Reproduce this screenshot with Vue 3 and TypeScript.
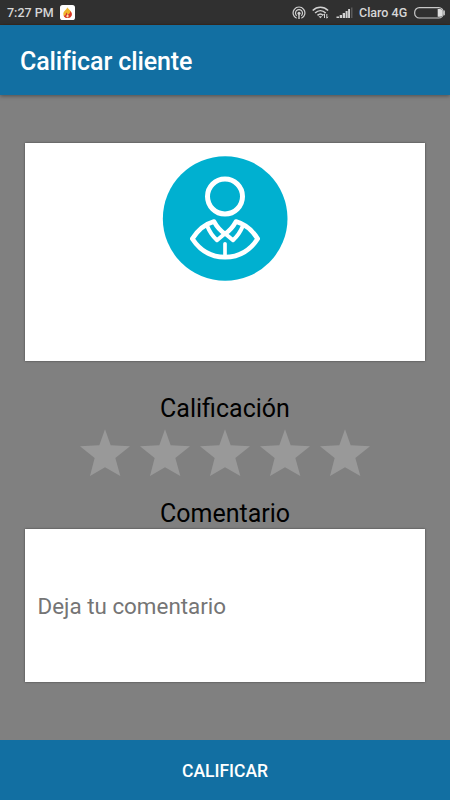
<script setup lang="ts">
import { ref } from 'vue'

const rating = ref<number>(0)
const comment = ref<string>('')
const stars: number[] = [1, 2, 3, 4, 5]
</script>

<template>
  <div class="screen">
    <div class="status">
      <span class="clock">7:27 PM</span>
      <svg class="notif" width="15" height="15" viewBox="0 0 15 15">
        <rect width="15" height="15" rx="2.6" fill="#fff" />
        <path d="M7.2 2.2C8 4 11.6 5.5 11.6 9c0 2.400-1.700 4-4 4s-4.300-1.500-4.300-4c0-1.500.8-2.700 1.700-3.600C6 4.500 7 3.600 7.200 2.200z" fill="#efb52c" />
        <path d="M10.300 6c1.500 1.500 1.900 3 1.400 4.500-.6 1.700-2.200 2.500-4.100 2.500-1.800 0-3.300-.8-4-2.300C5.500 11 6 9 6.200 7.500c.8.6 1.200 1.400 1.300 2.300C9 9.200 10.400 8 10.300 6z" fill="#d9362c" />
        <path d="M7.600 9.300c.8.8 1.200 1.400 1 2.200-.2.600-.6.900-1.200.9s-1.100-.4-1.100-1.100c0-.8.900-1.200 1.300-2z" fill="#f9dcae" />
      </svg>
      <span class="spacer"></span>
      <svg class="hotspot" width="14" height="14" viewBox="0 0 14 14" fill="none" stroke="#d2d2d2">
        <path d="M4.600 12.300A5.900 5.900 0 1 1 9.400 12.300" stroke-width="1.200" />
        <path d="M4.700 9.700A3.500 3.500 0 1 1 9.300 9.700" stroke-width="1.200" />
        <circle cx="7" cy="7.200" r="1.500" fill="#d2d2d2" stroke="none" />
        <path d="M7 8v5" stroke-width="1.400" />
      </svg>
      <svg class="wifi" width="17" height="13" viewBox="0 0 17 13" fill="none" stroke="#d2d2d2" stroke-width="1.600">
        <path d="M.7 4.500C5.200.2 11.600.2 16.100 4.500" />
        <path d="M3.100 7C6.300 3.900 10.500 3.900 13.700 7" />
        <path d="M5.500 9.300c1.800-1.600 4-1.600 5.700 0" />
        <path d="M6.500 10.200h3.800l-1.900 2z" fill="#d2d2d2" stroke="none" />
        <path d="M12.500 12V7.800m-1.100 1.300 1.100-1.300M14.800 8v4.200m1.100-1.400-1.100 1.400" stroke-width="1" />
      </svg>
      <svg class="signal" width="17" height="12" viewBox="0 0 17 12" fill="#d2d2d2">
        <rect x="0.500" y="9.500" width="2.500" height="1.500" />
        <rect x="3.700" y="8" width="2.300" height="3" />
        <rect x="6.700" y="6" width="2.300" height="5" />
        <rect x="9.600" y="4" width="2" height="7" />
        <rect x="12.100" y="2" width="1.900" height="9" />
        <rect x="15" y="0.500" width="1.500" height="10.500" fill="#5b5b5b" />
      </svg>
      <span class="carrier">Claro 4G</span>
      <svg class="battery" width="32" height="12" viewBox="0 0 32 12">
        <rect x="0.700" y="0.700" width="28.600" height="10.300" rx="4.600" fill="none" stroke="#c8c8c8" stroke-width="1.200" />
        <path d="M23.700 2h2.300a2.700 2.700 0 0 1 2.700 2.700v2.300a2.700 2.700 0 0 1-2.700 2.700h-2.300z" fill="#dedede" />
        <path d="M30.300 3.500v4.800" stroke="#c8c8c8" stroke-width="1.200" />
      </svg>
    </div>

    <header class="appbar">
      <h1>Calificar cliente</h1>
    </header>

    <main class="content">
      <section class="card profile">
        <svg class="avatar" width="126" height="126" viewBox="21 14.500 378 378" fill="none" stroke="#fff" stroke-linejoin="round" stroke-linecap="round">
          <circle cx="210.500" cy="205" r="187" fill="#00b0d0" stroke="none" />
          <circle cx="210" cy="139" r="52.500" stroke-width="15" />
          <path d="M177 214C149 222 128 240 112 266C136 303 170 321 210 321S284 303 308 266C292 240 271 222 243 214Q230 238 210 251Q190 238 177 214Z" stroke-width="14" />
          <path d="M157 228C163 243 173 258 186 270L210 250L234 270C247 258 257 243 263 228" stroke-width="12" />
          <path d="M210 281V319" stroke-width="11" />
        </svg>
      </section>

      <h2 class="label rating-label">Calificación</h2>
      <div class="stars">
        <button
          v-for="n in stars"
          :key="n"
          type="button"
          class="star"
          :class="{ on: n <= rating }"
          @click="rating = n"
        >
          <svg width="50" height="48" viewBox="0 0 150 144">
            <path d="M75 1L92 49L150 52L106 87L121 141L75 115L30 141L44 87L0 52L58 49Z" />
          </svg>
        </button>
      </div>

      <h2 class="label comment-label">Comentario</h2>
      <input v-model="comment" class="card comment" type="text" placeholder="Deja tu comentario" />
    </main>

    <button class="submit" type="button">CALIFICAR</button>
  </div>
</template>

<style>
body {
  margin: 0;
}
</style>

<style scoped>
.screen {
  box-sizing: border-box;
  width: 450px;
  height: 800px;
  display: flex;
  flex-direction: column;
  background: #808080;
  font-family: Roboto, "Liberation Sans", sans-serif;
  overflow: hidden;
}
.status {
  box-sizing: border-box;
  flex: none;
  height: 25px;
  display: flex;
  align-items: center;
  padding: 0 4px 0 7px;
  background: #303030;
  border-bottom: 1px solid #392b20;
  color: #d6d6d6;
  font-size: 12.5px;
  font-weight: 500;
  line-height: 24px;
}
.status svg {
  flex: none;
  display: block;
}
.clock {
  width: 53px;
  padding-top: 1px;
  white-space: nowrap;
}
.notif {
  margin-top: 1px;
}
.spacer {
  flex: 1;
}
.hotspot {
  margin-top: 1px;
}
.wifi {
  margin: 1px 0 0 6px;
}
.signal {
  margin: 2px 0 0 7px;
}
.carrier {
  margin-left: 6px;
  width: 49px;
  padding-top: 1px;
  white-space: nowrap;
}
.battery {
  margin: 1px 0 0 6px;
}
.appbar {
  flex: none;
  height: 70px;
  display: flex;
  align-items: center;
  padding-left: 20px;
  background: #126fa2;
  box-shadow: 0 1px 4px rgba(0, 0, 0, 0.4);
}
.appbar h1 {
  margin: 0;
  padding-top: 3px;
  color: #fff;
  font-size: 25px;
  letter-spacing: -0.11px;
  font-variant-ligatures: common-ligatures;
  font-weight: 500;
  line-height: 30px;
}
.content {
  flex: 1;
  display: flex;
  flex-direction: column;
  align-items: center;
  padding: 48px 25px 0;
}
.card {
  box-sizing: border-box;
  width: 400px;
  background: #fff;
  box-shadow: 0 0 2px rgba(0, 0, 0, 0.5);
}
.profile {
  height: 218px;
  display: flex;
  justify-content: center;
  align-items: flex-start;
  padding-top: 12px;
}
.avatar {
  display: block;
}
.label {
  margin: 0;
  color: #000;
  font-size: 25px;
  font-weight: 400;
  line-height: 30px;
  text-align: center;
}
.rating-label {
  margin-top: 33px;
}
.stars {
  display: flex;
  gap: 10px;
  margin-top: 5px;
}
.star {
  display: block;
  width: 50px;
  height: 48px;
  padding: 0;
  border: 0;
  background: none;
}
.star svg {
  display: block;
  fill: #999;
}
.star.on svg {
  fill: #126fa2;
}
.comment-label {
  margin-top: 22px;
}
.comment {
  height: 153px;
  border: 0;
  border-radius: 0;
  outline: 0;
  padding: 0 13px 0 12.500px;
  color: #000;
  font-family: inherit;
  font-size: 22.400px;
}
.comment::placeholder {
  color: #757575;
  opacity: 1;
}
.submit {
  flex: none;
  height: 60px;
  padding: 2px 0 0;
  border: 0;
  background: #126fa2;
  color: #fff;
  font-family: inherit;
  font-size: 17.500px;
  font-weight: 500;
}
</style>
